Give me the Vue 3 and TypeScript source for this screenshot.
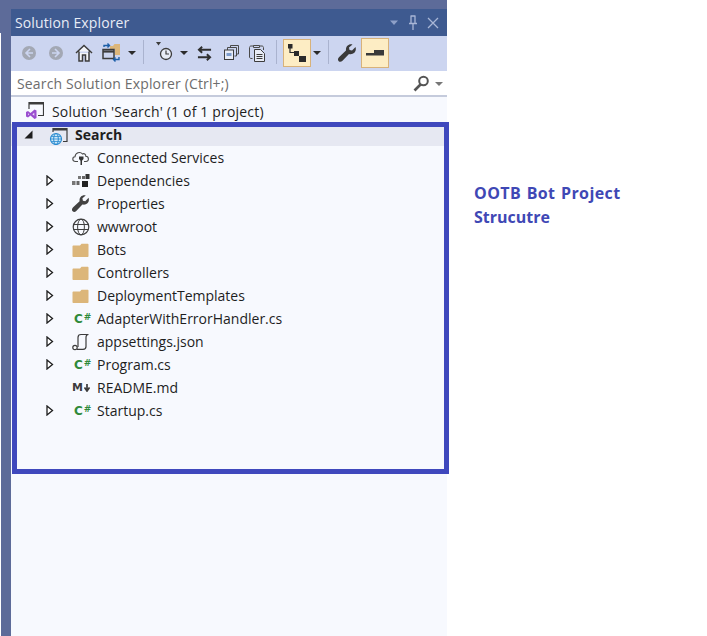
<script setup lang="ts">
type Kind = 'cloud' | 'deps' | 'wrench' | 'globe' | 'folder' | 'cs' | 'json' | 'md'

interface Row {
  label: string
  icon: Kind
  expand: boolean
}

const rows: Row[] = [
  { label: 'Connected Services', icon: 'cloud', expand: false },
  { label: 'Dependencies', icon: 'deps', expand: true },
  { label: 'Properties', icon: 'wrench', expand: true },
  { label: 'wwwroot', icon: 'globe', expand: true },
  { label: 'Bots', icon: 'folder', expand: true },
  { label: 'Controllers', icon: 'folder', expand: true },
  { label: 'DeploymentTemplates', icon: 'folder', expand: true },
  { label: 'AdapterWithErrorHandler.cs', icon: 'cs', expand: true },
  { label: 'appsettings.json', icon: 'json', expand: true },
  { label: 'Program.cs', icon: 'cs', expand: true },
  { label: 'README.md', icon: 'md', expand: false },
  { label: 'Startup.cs', icon: 'cs', expand: true },
]

const wrenchPath =
  'M17.5 3L14 6.5 11.500 6 11 3.500 14.500.5C10.500-.5 7.500 2.500 8 6.500L1.200 13C-.5 14.800-.3 16.300.7 17.200 1.800 18.200 3.300 18 4.500 16.800L11 10C15.500 11 19 7.500 17.500 3z'
</script>

<template>
  <div class="page">
    <div class="strip"></div>
    <div class="panel">
      <div class="title-bar">
        <span class="title">Solution Explorer</span>
        <div class="title-btns">
          <svg width="10" height="6" viewBox="0 0 10 6"><path d="M1 0.5h8L5 5z" fill="#8fa0c8" /></svg>
          <svg width="10" height="15" viewBox="0 0 10 15"><path d="M2.500 1h5M3 1v7M7 1v7M1 8.500h8M5 9v6" fill="none" stroke="#a9b6d6" stroke-width="1.300" /></svg>
          <svg width="12" height="12" viewBox="0 0 12 12"><path d="M1 1l10 10M11 1L1 11" stroke="#a9b6d6" stroke-width="1.300" /></svg>
        </div>
      </div>

      <div class="toolbar">
        <svg class="t-back" width="16" height="16" viewBox="0 0 16 16"><circle cx="8" cy="8" r="7" fill="#a3a8b4" /><path d="M9 4L5 8l4 4M5 8h7" fill="none" stroke="#ccd5f0" stroke-width="1.600" /></svg>
        <svg class="t-fwd" width="16" height="16" viewBox="0 0 16 16"><circle cx="8" cy="8" r="7" fill="#a3a8b4" /><path d="M7 4l4 4-4 4M11 8H4" fill="none" stroke="#ccd5f0" stroke-width="1.600" /></svg>
        <svg class="t-home" width="18" height="18" viewBox="0 0 18 18"><path d="M1 9l8-7.500L17 9M4 7.500V17h3.500v-6h3v6H14V7.500" fill="#f4f5f8" stroke="#3c3c3c" stroke-width="1.500" /></svg>
        <svg class="t-sync" width="19" height="19" viewBox="0 0 19 19">
          <path d="M8 3h3l1.500-2H18v11h-5V6H8z" fill="#dcb67a" />
          <rect x="1" y="6.500" width="11" height="9" fill="#ccd5f0" stroke="#3c3c3c" stroke-width="1.500" />
          <path d="M1 8.500h11" stroke="#3c3c3c" stroke-width="2.200" />
          <path d="M2 4V2.500h5M5.500 0.500l2 2-2 2" fill="none" stroke="#1c5fa8" stroke-width="1.400" />
          <path d="M17 14v2.500h-5M13.500 14.500l-2 2 2 2" fill="none" stroke="#1c5fa8" stroke-width="1.400" />
        </svg>
        <i class="caret c1"></i>
        <i class="sep s1"></i>
        <svg class="t-clock" width="18" height="20" viewBox="0 0 18 20">
          <path d="M0 0h5L2.500 3.500z" fill="#3c3c3c" />
          <circle cx="10" cy="12" r="5.500" fill="#e8ecf6" stroke="#3c3c3c" stroke-width="1.300" />
          <path d="M10 8.500V12h3" fill="none" stroke="#3c3c3c" stroke-width="1.200" />
        </svg>
        <i class="caret c2"></i>
        <svg class="t-swap" width="15" height="15" viewBox="0 0 16 16"><path d="M15 4H2M5.500 0.800L2 4l3.500 3.200M1 12h13M10.500 8.800L14 12l-3.500 3.200" fill="none" stroke="#2f2f2f" stroke-width="2" /></svg>
        <svg class="t-copy" width="15" height="15" viewBox="0 0 15 15">
          <path d="M6.500 2.500v-2h8v8.500h-2" fill="none" stroke="#4a4a4a" />
          <path d="M3.500 5V2.500h9V11h-2" fill="none" stroke="#4a4a4a" />
          <rect x="0.500" y="5" width="9" height="9.500" fill="#e8ecf6" stroke="#3c3c3c" />
          <rect x="2.500" y="8" width="5" height="3" fill="#7d9ccc" />
        </svg>
        <svg class="t-paste" width="18" height="18" viewBox="0 0 18 18">
          <path d="M3.500 14.500H2c-.8 0-1.500-.7-1.500-1.500V3.500c0-.8.7-1.500 1.500-1.500h11c.8 0 1.500.7 1.500 1.500V6" fill="none" stroke="#4a4a4a" />
          <path d="M4.500 3.500v-2h6v2z" fill="#ccd5f0" stroke="#4a4a4a" />
          <path d="M5.500 5.500h6l4 4v8h-10z" fill="#e8ecf6" stroke="#3c3c3c" />
          <path d="M7.500 10.500h6M7.500 12.500h6M7.500 14.500h6" stroke="#3c3c3c" />
        </svg>
        <i class="sep s2"></i>
        <span class="toggle t1">
          <svg width="19" height="18" viewBox="0 0 19 18"><rect x="0" y="0" width="4.500" height="4.500" fill="#2b2b2b" /><rect x="6" y="7" width="5" height="5" fill="#2b2b2b" /><rect x="11" y="12" width="7" height="6" fill="#2b2b2b" /><path d="M2 3v5.500h5" fill="none" stroke="#2b2b2b" stroke-width="1.200" /></svg>
        </span>
        <i class="caret c3"></i>
        <i class="sep s3"></i>
        <svg class="t-wrench" width="19" height="19" viewBox="0 0 19 19"><path :d="wrenchPath" fill="#3a3a3a" /></svg>
        <span class="toggle t2">
          <svg width="18" height="6" viewBox="0 0 18 6"><rect x="8" y="0" width="10" height="3" fill="#3a3a3a" /><rect x="0" y="3" width="18" height="2.500" fill="#3a3a3a" /></svg>
        </span>
      </div>

      <div class="search">
        <span class="search-text">Search Solution Explorer (Ctrl+;)</span>
        <svg class="glass" width="17" height="17" viewBox="0 0 17 17"><circle cx="10.500" cy="6" r="4.300" fill="none" stroke="#555" stroke-width="2" /><path d="M7.500 9.500L1.500 15.500" stroke="#555" stroke-width="2.600" /></svg>
        <i class="caret c4"></i>
      </div>

      <div class="tree">
        <div class="solution-row">
          <svg class="sol-icon" width="18" height="18" viewBox="0 0 18 18">
            <path d="M3 8V1.500h14.500V14.500H12" fill="none" stroke="#3c3c3c" stroke-width="1.200" />
            <path d="M3 2.500h14" stroke="#3c3c3c" stroke-width="2" />
            <path d="M0 11l2-1 2.500 2 4-3.500L10.500 9.500v7.500l-2 1-4-3.500L2 16.500l-2-1z" fill="#9b4fd0" />
            <path d="M2 12.300v1.900l1.200-1zM8.300 11.800l-2 1.500 2 1.500z" fill="#e9d8f6" />
          </svg>
          <span class="sol-text">Solution 'Search' (1 of 1 project)</span>
        </div>

        <div class="project-row">
          <svg class="arrow-open" width="9" height="9" viewBox="0 0 9 9"><path d="M8.500 0.500v8h-8z" fill="#1e1e1e" /></svg>
          <svg class="proj-icon" width="19" height="18" viewBox="0 0 19 18">
            <path d="M4 5V1.500h14V14.500H14" fill="none" stroke="#3c3c3c" stroke-width="1.200" />
            <path d="M4 2.500h14" stroke="#3c3c3c" stroke-width="2" />
            <circle cx="7" cy="12" r="5.500" fill="#cfe8f8" stroke="#2a8bd0" stroke-width="1.200" />
            <ellipse cx="7" cy="12" rx="2.300" ry="5.500" fill="none" stroke="#2a8bd0" />
            <path d="M1.500 12h11M2.300 9.500h9.400M2.300 14.500h9.400" stroke="#2a8bd0" stroke-width=".8" />
          </svg>
          <span class="proj-name">Search</span>
        </div>

        <div v-for="row in rows" :key="row.label" class="row">
          <span class="expander">
            <svg v-if="row.expand" width="8" height="11" viewBox="0 0 8 11"><path d="M1 1l5.500 4.500L1 10z" fill="#fff" stroke="#1e1e1e" stroke-width="1.300" /></svg>
          </span>
          <span class="icon">
            <svg v-if="row.icon === 'cloud'" width="18" height="16" viewBox="0 0 18 16">
              <path d="M6 11.500H3.500C0 11.500 0 7 3 6.800 3.300 3 8 1 10.500 4 12 3 14 4.300 13.800 6.300 17 6.300 17.500 11.500 14 11.500h-2" fill="none" stroke="#4a4a4a" stroke-width="1.100" />
              <path d="M7 6.500h4.500v2.500L10 10.800V15H8.500v-4.200L7 9z" fill="#333" />
            </svg>
            <svg v-else-if="row.icon === 'deps'" width="18" height="13" viewBox="0 0 18 13">
              <rect x="0" y="7" width="3.500" height="4" fill="#777" />
              <rect x="4.500" y="7" width="3" height="4" fill="#666" />
              <rect x="6" y="2" width="3" height="3" fill="#777" />
              <rect x="10" y="2" width="3" height="3" fill="#666" />
              <rect x="13.500" y="0" width="4" height="5" fill="#333" />
              <rect x="10" y="7" width="6" height="6" fill="#222" />
            </svg>
            <svg v-else-if="row.icon === 'wrench'" width="18" height="18" viewBox="0 0 19 19"><path :d="wrenchPath" fill="#424242" /></svg>
            <svg v-else-if="row.icon === 'globe'" width="18" height="18" viewBox="0 0 18 18">
              <circle cx="9" cy="9" r="7.800" fill="none" stroke="#3f3f3f" stroke-width="1.200" />
              <ellipse cx="9" cy="9" rx="3.400" ry="7.800" fill="none" stroke="#3f3f3f" />
              <path d="M1.500 6.500h15M1.500 11.500h15" stroke="#3f3f3f" />
            </svg>
            <svg v-else-if="row.icon === 'folder'" width="17" height="14" viewBox="0 0 17 14"><path d="M.5 3.500C.5 2.800 1 2.500 1.500 2.500H8L9.500.8h6c.6 0 1 .4 1 1V13c0 .6-.4 1-1 1h-14c-.6 0-1-.4-1-1z" fill="#dcb67a" /></svg>
            <span v-else-if="row.icon === 'cs'" class="cs-glyph">C<small>#</small></span>
            <svg v-else-if="row.icon === 'json'" width="17" height="18" viewBox="0 0 17 18">
              <path d="M6 14V4.500C6 2.500 7 1.500 9 1.500h7.500C14.800 1.500 14 2.800 14 4.500v9c0 1.800-1 2.800-3 2.800H5" fill="none" stroke="#3c3c3c" stroke-width="1.200" />
              <circle cx="3" cy="14.500" r="2.200" fill="#fff" stroke="#3c3c3c" stroke-width="1.200" />
            </svg>
            <span v-else class="md-glyph">M<svg width="6" height="8" viewBox="0 0 6 8"><path d="M3 0v6M.5 3.500L3 7l2.500-3.500" fill="none" stroke="#3c3c3c" stroke-width="1.700" /></svg></span>
          </span>
          <span class="label">{{ row.label }}</span>
        </div>
      </div>

      <div class="highlight"></div>
    </div>

    <div class="note">OOTB Bot Project<br />Strucutre</div>
  </div>
</template>

<style scoped>
.page {
  position: relative;
  display: flex;
  width: 707px;
  height: 636px;
  overflow: hidden;
  background: #fff;
  font-family: "Open Sans", "Noto Sans", sans-serif;
}

.strip {
  width: 11px;
  background:
    linear-gradient(#5d6b99, #5d6b99) 1px 0 / 10px 100% no-repeat,
    linear-gradient(#5d6b99, #5d6b99) 0 0 / 1px 33px no-repeat;
}

.panel {
  position: relative;
  width: 436px;
  display: flex;
  flex-direction: column;
  padding-top: 9px;
  background: linear-gradient(#5d6b99 0 9px, transparent 9px);
}

.title-bar {
  height: 27px;
  flex: none;
  display: flex;
  align-items: center;
  justify-content: space-between;
  padding: 0 8px 0 4px;
  background: #3e5a90;
  color: #e8ecf6;
  font-size: 14px;
}

.title {
  letter-spacing: 0.12px;
}

.title-btns {
  display: flex;
  align-items: center;
  gap: 9px;
}

.toolbar {
  position: relative;
  height: 34px;
  flex: none;
  background: #ccd5f0;
}

.toolbar > svg,
.toolbar > i,
.toolbar > span {
  position: absolute;
}

.t-back { left: 10px; top: 9px; }
.t-fwd { left: 37px; top: 9px; }
.t-home { left: 64px; top: 8px; }
.t-sync { left: 91px; top: 7px; }
.t-clock { left: 145px; top: 6px; }
.t-swap { left: 186px; top: 10px; }
.t-copy { left: 213px; top: 9px; }
.t-paste { left: 238px; top: 8px; }
.t-wrench { left: 327px; top: 8px; }

.caret {
  width: 0;
  height: 0;
  border-left: 4px solid transparent;
  border-right: 4px solid transparent;
  border-top: 4px solid #2b2b2b;
}

.c1 { left: 117px; top: 15px; }
.c2 { left: 169px; top: 15px; }
.c3 { left: 302px; top: 15px; }

.sep {
  width: 1px;
  height: 24px;
  top: 4px;
  background: #aab3cf;
}

.s1 { left: 132px; }
.s2 { left: 265px; }
.s3 { left: 317px; }

.toggle {
  display: flex;
  align-items: center;
  justify-content: center;
  background: #fdedc4;
  border: 1px solid #d8b27a;
}

.t1 { left: 272px; top: 3px; width: 26px; height: 26px; }
.t2 { left: 350px; top: 2px; width: 26px; height: 28px; }

.search {
  position: relative;
  height: 27px;
  flex: none;
  display: flex;
  align-items: center;
  padding: 1px 0 0 6px;
  background: #fff;
  border-top: 1px solid #ccd5f0;
  border-bottom: 2px solid #c5cbdc;
  box-sizing: border-box;
  color: #6d6d6d;
  font-size: 14px;
}

.search-text {
  letter-spacing: 0.15px;
}

.glass {
  position: absolute;
  left: 402px;
  top: 4px;
}

.c4 {
  position: absolute;
  left: 424px;
  top: 11px;
  border-top-color: #777;
}

.tree {
  flex: 1;
  background: #f7f9fe;
  color: #1e1e1e;
  font-size: 14px;
}

.solution-row {
  display: flex;
  align-items: center;
  height: 27px;
  box-sizing: border-box;
  padding: 2px 0 0 15px;
  gap: 8px;
}

.sol-icon {
  flex: none;
  margin-top: -4px;
}

.sol-text {
  letter-spacing: 0.18px;
}

.project-row {
  display: flex;
  align-items: center;
  height: 22px;
  box-sizing: border-box;
  padding: 0 0 2px 38px;
  background: #e6e8f2;
  font-weight: 700;
  position: relative;
}

.arrow-open {
  position: absolute;
  left: 13px;
  top: 6px;
}

.proj-icon {
  margin: 4px 7px 0 0;
}

.row {
  display: flex;
  align-items: center;
  height: 23px;
}

.expander {
  width: 61px;
  flex: none;
  display: flex;
  justify-content: flex-start;
  padding-left: 35px;
  box-sizing: border-box;
}

.icon {
  width: 25px;
  flex: none;
  display: flex;
  align-items: center;
  justify-content: flex-start;
}

.cs-glyph {
  display: flex;
  align-items: flex-start;
  color: #2f8a3a;
  font: 700 12px/12px "DejaVu Sans", sans-serif;
  padding-left: 2px;
}

.cs-glyph small {
  font-size: 9px;
  line-height: 9px;
  font-weight: 700;
  margin-left: 1px;
}

.md-glyph {
  display: flex;
  align-items: center;
  color: #3c3c3c;
  font: 700 11px "DejaVu Sans", sans-serif;
  gap: 1px;
}

.highlight {
  position: absolute;
  left: 1px;
  top: 122px;
  width: 437px;
  height: 352px;
  box-sizing: border-box;
  border: 5px solid #3f48bd;
  pointer-events: none;
}

.note {
  margin: 181px 0 0 27px;
  color: #3f48b5;
  font-size: 16px;
  font-weight: 700;
  line-height: 24px;
}

.note::first-line {
  letter-spacing: 0.4px;
  word-spacing: 1px;
}
</style>
